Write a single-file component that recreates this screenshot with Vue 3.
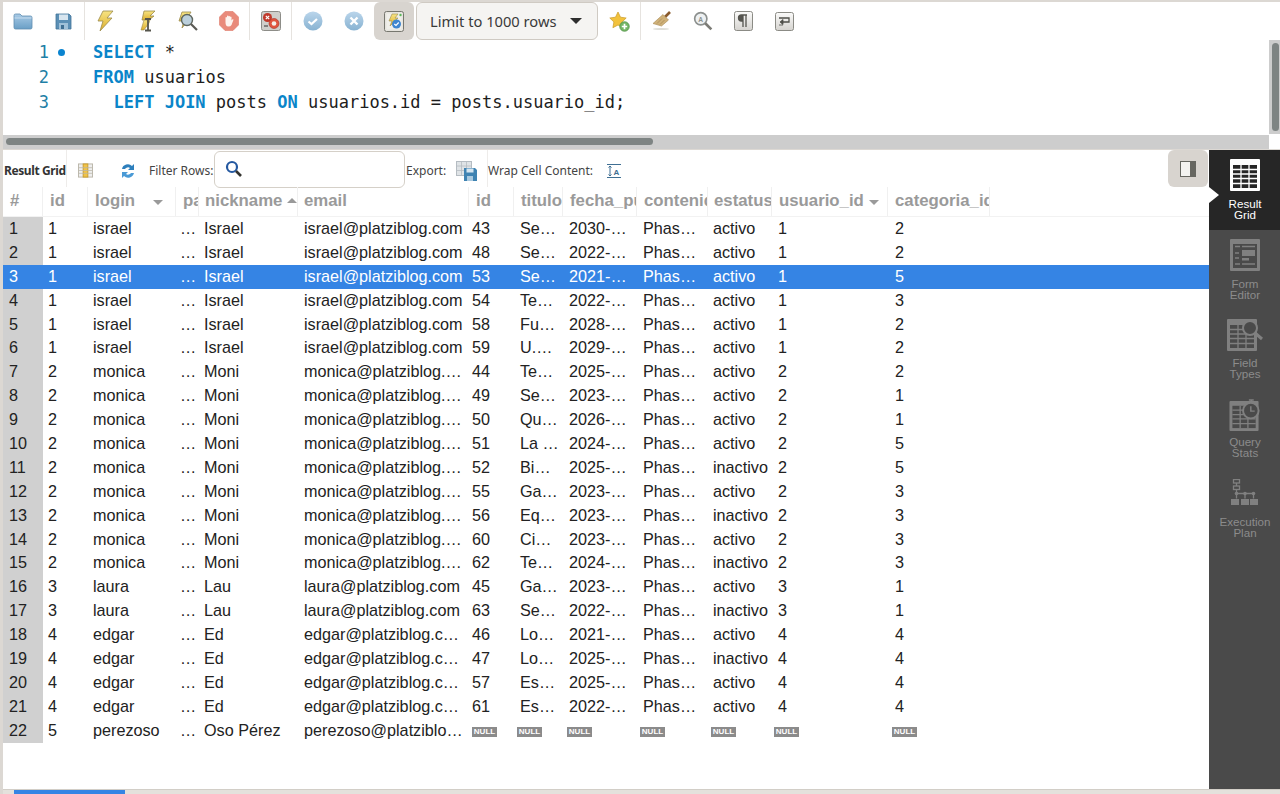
<script setup>
const headers = [
  { label: "#", w: 40 },
  { label: "id", w: 45 },
  { label: "login", w: 88, sort: "down" },
  { label: "pa", w: 23 },
  { label: "nickname", w: 99, sort: "up", tight: true },
  { label: "email", w: 171, tight: true },
  { label: "id", w: 45 },
  { label: "titulo", w: 49 },
  { label: "fecha_pu", w: 74 },
  { label: "contenido", w: 71 },
  { label: "estatus", w: 64, tight: true },
  { label: "usuario_id", w: 116, sort: "down far" },
  { label: "categoria_id", w: 102 },
];

const users = {
  1: ["1", "israel", "…", "Israel", "israel@platziblog.com"],
  2: ["2", "monica", "…", "Moni", "monica@platziblog.…"],
  3: ["3", "laura", "…", "Lau", "laura@platziblog.com"],
  4: ["4", "edgar", "…", "Ed", "edgar@platziblog.c…"],
  5: ["5", "perezoso", "…", "Oso Pérez", "perezoso@platziblo…"],
};

const posts = [
  [1, "43", "Se…", "2030-…", "activo", "2"],
  [1, "48", "Se…", "2022-…", "activo", "2"],
  [1, "53", "Se…", "2021-…", "activo", "5"],
  [1, "54", "Te…", "2022-…", "activo", "3"],
  [1, "58", "Fu…", "2028-…", "activo", "2"],
  [1, "59", "U.…", "2029-…", "activo", "2"],
  [2, "44", "Te…", "2025-…", "activo", "2"],
  [2, "49", "Se…", "2023-…", "activo", "1"],
  [2, "50", "Qu…", "2026-…", "activo", "1"],
  [2, "51", "La …", "2024-…", "activo", "5"],
  [2, "52", "Bi…", "2025-…", "inactivo", "5"],
  [2, "55", "Ga…", "2023-…", "activo", "3"],
  [2, "56", "Eq…", "2023-…", "inactivo", "3"],
  [2, "60", "Ci…", "2023-…", "activo", "3"],
  [2, "62", "Te…", "2024-…", "inactivo", "3"],
  [3, "45", "Ga…", "2023-…", "activo", "1"],
  [3, "63", "Se…", "2022-…", "inactivo", "1"],
  [4, "46", "Lo…", "2021-…", "activo", "4"],
  [4, "47", "Lo…", "2025-…", "inactivo", "4"],
  [4, "57", "Es…", "2025-…", "activo", "4"],
  [4, "61", "Es…", "2022-…", "activo", "4"],
];

const rows = posts.map((p, i) => {
  const u = users[p[0]];
  return {
    num: i + 1,
    cells: [...u, p[1], p[2], p[3], "Phas…", p[4], String(p[0]), p[5]],
  };
});
rows.push({
  num: 22,
  cells: [...users[5], null, null, null, null, null, null, null],
});

const headerCols = headers.map((h) => h.w + "px").join(" ");

// the NULL badges don't sit on the same left edge as the text of their column
const nullShift = { 5: 0, 6: -3, 7: -2, 8: -3, 9: -2, 10: -4, 11: -3 };
</script>

<template>
  <div class="app">
    <svg class="defs" width="0" height="0">
      <defs>
        <linearGradient id="gBlue" x1="0" y1="0" x2="0" y2="1">
          <stop offset="0" stop-color="#a9cbe6" />
          <stop offset="1" stop-color="#6a9fc6" />
        </linearGradient>
        <linearGradient id="gBolt" x1="0" y1="0" x2="0" y2="1">
          <stop offset="0" stop-color="#f7e483" />
          <stop offset="1" stop-color="#dcae2c" />
        </linearGradient>
        <linearGradient id="gKey" x1="0" y1="0" x2="0" y2="1">
          <stop offset="0" stop-color="#fbfbfa" />
          <stop offset="1" stop-color="#d5d3cf" />
        </linearGradient>
      </defs>
    </svg>

    <div class="topline"></div>

    <div class="toolbar">
      <div class="slot first">
        <svg width="20" height="18" viewBox="0 0 20 18">
          <path d="M1 3.500q0-1.500 1.500-1.500h4.500l2 2h8.500q1.500 0 1.500 1.500v10q0 1.500-1.500 1.500h-15q-1.500 0-1.500-1.500z" fill="url(#gBlue)" stroke="#5f8eb0" stroke-width=".8" />
          <path d="M1.500 6h17" stroke="#d3e5f2" stroke-width=".8" />
        </svg>
      </div>
      <div class="slot wide">
        <svg width="17" height="17" viewBox="0 0 17 17">
          <path d="M1 1h13l2 2v13h-15z" fill="#5b8fb5" stroke="#43749a" stroke-width=".8" />
          <rect x="4" y="1.500" width="9" height="5.500" fill="#d7e5ef" />
          <rect x="4" y="10" width="9" height="6" fill="#9fc0d8" />
          <rect x="6" y="12" width="3" height="4" fill="#3f6f93" />
        </svg>
      </div>
      <div class="sep"></div>
      <div class="slot narrow">
        <svg width="18" height="22" viewBox="0 0 18 22">
          <path d="M7 1h10l-6 7h5L4 21l3-10H2z" fill="url(#gBolt)" stroke="#9a8a4c" stroke-width=".8" />
        </svg>
      </div>
      <div class="slot extra">
        <svg width="18" height="22" viewBox="0 0 18 22">
          <path d="M6 1h11l-5 5h4l-5 4H4z" fill="url(#gBolt)" stroke="#9a8a4c" stroke-width=".8" />
          <path d="M3 20l3-10h6l-1 3-5 7z" fill="url(#gBolt)" stroke="#9a8a4c" stroke-width=".6" />
          <path d="M7 9h6M10 9v11M7 20.500h6" stroke="#55554c" stroke-width="1.800" fill="none" />
        </svg>
      </div>
      <div class="slot narrow">
        <svg width="22" height="21" viewBox="0 0 22 21">
          <path d="M5 1h9l-3 5h3L5 17l2-7H2z" fill="url(#gBolt)" stroke="#9a8a4c" stroke-width=".8" />
          <circle cx="10" cy="9" r="5.500" fill="#bcd0dc" stroke="#5e665f" stroke-width="1.400" />
          <path d="M14 13l6 6" stroke="#5b5b55" stroke-width="2.200" />
        </svg>
      </div>
      <div class="slot">
        <svg width="20" height="20" viewBox="0 0 20 20">
          <path d="M6 .5h8L19.500 6v8L14 19.500H6L.5 14V6z" fill="#e98a7a" stroke="#dd7a6a" stroke-width=".6" />
          <path d="M6.500 11V6.500a.8.8 0 0 1 1.500 0V5a.8.8 0 0 1 1.500 0v.5a.8.8 0 0 1 1.500 0V6a.8.8 0 0 1 1.500 0v3.500l.8-1c.7-.7 1.500 0 1 .8L12.500 14q-1 1.500-3 1.500c-2.500 0-3-2-3-4.500z" fill="#fdf3ee" />
        </svg>
      </div>
      <div class="sep"></div>
      <div class="slot">
        <svg width="20" height="20" viewBox="0 0 20 20">
          <rect x=".5" y=".5" width="19" height="19" rx="2" fill="#cfcfcb" stroke="#8d8d88" />
          <circle cx="6.500" cy="6.500" r="4.500" fill="#c0392b" />
          <path d="M4.800 4.800l3.400 3.400M8.200 4.800l-3.400 3.400" stroke="#fff" stroke-width="1.200" />
          <circle cx="13" cy="12.500" r="5" fill="#e0553f" stroke="#a93226" stroke-width=".6" />
          <circle cx="13" cy="12.500" r="2.300" fill="#f5f0ea" />
          <path d="M3 15h4" stroke="#666" stroke-width="1.500" />
        </svg>
      </div>
      <div class="sep"></div>
      <div class="slot">
        <svg width="20" height="20" viewBox="0 0 20 20">
          <circle cx="10" cy="10" r="9.500" fill="url(#gBlue)" opacity=".8" />
          <path d="M5.500 10.500l3 2.500 5.500-5" stroke="#fff" stroke-width="2.200" fill="none" />
        </svg>
      </div>
      <div class="slot">
        <svg width="20" height="20" viewBox="0 0 20 20">
          <circle cx="10" cy="10" r="9.500" fill="url(#gBlue)" opacity=".8" />
          <path d="M6.500 6.500l7 7M13.500 6.500l-7 7" stroke="#fff" stroke-width="2.400" />
        </svg>
      </div>
      <div class="slot active">
        <svg width="20" height="21" viewBox="0 0 20 21">
          <rect x=".5" y=".5" width="19" height="20" rx="2" fill="#e6e4de" stroke="#77776f" />
          <rect x="2.500" y="2.500" width="15" height="16" fill="#f0efea" />
          <path d="M8 3h6l-3 4h3L6 15l2-5H5z" fill="url(#gBolt)" stroke="#9a8a4c" stroke-width=".6" />
          <circle cx="12.500" cy="13" r="4.500" fill="#3f86d0" />
          <path d="M10.300 13l1.700 1.500 2.700-3" stroke="#fff" stroke-width="1.200" fill="none" />
          <circle cx="16.500" cy="4" r="1.200" fill="#5cb85c" />
        </svg>
      </div>
      <div class="combo">
        <span>Limit to 1000 rows</span>
        <span class="caret"></span>
      </div>
      <div class="slot wide">
        <svg width="21" height="21" viewBox="0 0 21 21">
          <path d="M9 1l2.500 5.200 5.700.8-4.100 4 1 5.700L9 14l-5.100 2.700 1-5.700-4.100-4 5.700-.8z" fill="#f2c23c" stroke="#c99a24" stroke-width=".7" />
          <circle cx="15.500" cy="15.500" r="4.800" fill="#74b566" stroke="#4f8f45" stroke-width=".7" />
          <path d="M15.500 12.800v5.400M12.800 15.500h5.400" stroke="#fff" stroke-width="1.700" />
        </svg>
      </div>
      <div class="sep"></div>
      <div class="slot">
        <svg width="20" height="20" viewBox="0 0 20 20">
          <path d="M13 6l5-5" stroke="#8a5a2c" stroke-width="2.600" />
          <path d="M11 3.500l5.500 5.500-7 6-8.500-2.500z" fill="#d0b27a" stroke="#a88a54" stroke-width=".6" />
          <path d="M5 12.500l5-5M8 13.500l4.500-4.500" stroke="#a88a54" stroke-width=".8" />
          <ellipse cx="9" cy="18" rx="8" ry="1" fill="#deded8" />
        </svg>
      </div>
      <div class="slot">
        <svg width="20" height="20" viewBox="0 0 18 18">
          <circle cx="7" cy="7" r="5.500" fill="#eef1f2" stroke="#8c908e" stroke-width="1.500" />
          <path d="M11 11l5.500 5.500" stroke="#7c7c76" stroke-width="2.400" />
          <text x="7" y="9.500" class="tiny">A</text>
        </svg>
      </div>
      <div class="slot">
        <svg width="19" height="20" viewBox="0 0 19 20">
          <rect x=".5" y=".5" width="18" height="19" rx="2" fill="url(#gKey)" stroke="#8b8b85" />
          <path d="M9 4H7.500a3 3 0 0 0 0 6H9zM9 4h4M9 4v12M12 4v12" fill="#55554f" stroke="#55554f" stroke-width="1.300" />
        </svg>
      </div>
      <div class="slot">
        <svg width="19" height="19" viewBox="0 0 19 19">
          <rect x=".5" y=".5" width="18" height="18" rx="2" fill="url(#gKey)" stroke="#8b8b85" />
          <path d="M4 6h10v4H7" stroke="#4f4f49" stroke-width="1.300" fill="none" />
          <path d="M8 7.500L5 10l3 2.500zM4 13h4" fill="#4f4f49" stroke="#4f4f49" stroke-width=".8" />
        </svg>
      </div>
    </div>

    <div class="editor-area">
      <div class="editor">
        <div class="code-line">
          <span class="ln">1</span><span class="dot"></span><span class="code"><b>SELECT</b> *</span>
        </div>
        <div class="code-line">
          <span class="ln">2</span><span class="nodot"></span><span class="code"><b>FROM</b> usuarios</span>
        </div>
        <div class="code-line">
          <span class="ln">3</span><span class="nodot"></span><span class="code">&nbsp;&nbsp;<b>LEFT JOIN</b> posts <b>ON</b> usuarios.id = posts.usuario_id;</span>
        </div>
      </div>
      <div class="vscroll"><div class="vthumb"></div></div>
    </div>
    <div class="hscroll-row">
      <div class="hscroll"><div class="hthumb"></div></div>
    </div>

    <div class="lower">
      <div class="results">
        <div class="result-bar">
          <span class="rg-title">Result Grid</span>
          <span class="rb-sep"></span>
          <svg class="rb-icon rb-grid" width="15" height="15" viewBox="0 0 16 15">
            <rect x=".5" y=".5" width="15" height="14" fill="#eee" stroke="#b9b5a8" />
            <rect x="5.500" y=".5" width="5" height="14" fill="#f0c348" stroke="#c99c2c" />
            <path d="M1 4.500h14M1 7.500h14M1 10.500h14" stroke="#b9b5a8" stroke-width=".8" />
          </svg>
          <svg class="rb-icon rb-refresh" width="18" height="16" viewBox="0 0 18 16">
            <path d="M3 6a6 6 0 0 1 10-3l2-2v6h-6l2-2a3.500 3.500 0 0 0-5 1z" fill="#2d7fbc" />
            <path d="M15 10a6 6 0 0 1-10 3l-2 2V9h6l-2 2a3.500 3.500 0 0 0 5-1z" fill="#4a9ad6" />
          </svg>
          <span class="rb-label filter-label">Filter Rows:</span>
          <div class="filter-box">
            <svg width="18" height="18" viewBox="0 0 18 18">
              <circle cx="7" cy="7" r="5" fill="#fff" stroke="#2458a0" stroke-width="2.200" />
              <path d="M11 11l5 5" stroke="#33332f" stroke-width="2.600" />
            </svg>
          </div>
          <span class="rb-label export-label">Export:</span>
          <svg class="rb-icon" width="21" height="20" viewBox="0 0 21 20">
            <rect x=".5" y=".5" width="15" height="14" fill="#dfe3e6" stroke="#b5bcc2" />
            <path d="M.5 5h15M.5 9.500h15M5.500.5v14M10.500.5v14" stroke="#b5bcc2" stroke-width=".8" />
            <path d="M8 7h11l2 2v11H8z" fill="#3f83b2" />
            <rect x="10.500" y="7.500" width="7" height="4" fill="#d5e5f0" />
            <rect x="11" y="15" width="6" height="5" fill="#a9c9df" />
          </svg>
          <span class="rb-sep2"></span>
          <span class="rb-label wrap-label">Wrap Cell Content:</span>
          <svg class="rb-icon" width="14" height="14" viewBox="0 0 14 14">
            <path d="M0 .5h14M0 13.500h14" stroke="#3f6f93" />
            <path d="M3 2v10M1.500 3.500L3 2l1.500 1.500M1.500 10.500L3 12l1.500-1.500" stroke="#3f6f93" fill="none" />
            <text x="9.500" y="10.500" class="wrap-a">A</text>
          </svg>
          <div class="panel-toggle">
            <svg width="16" height="16" viewBox="0 0 16 16">
              <rect x=".5" y=".5" width="15" height="15" fill="#f4f3f0" stroke="#666660" />
              <rect x="10" y="1" width="5" height="14" fill="#666660" />
            </svg>
          </div>
        </div>

        <div class="grid-head" :style="{ gridTemplateColumns: headerCols }">
          <div v-for="(h, i) in headers" :key="i" class="hcell" :class="{ tight: h.tight }">
            <span class="hlabel">{{ h.label }}</span>
            <span v-if="h.sort" class="sort" :class="h.sort"></span>
          </div>
        </div>

        <div class="grid-body">
          <div v-for="r in rows" :key="r.num" class="row" :class="{ selected: r.num === 3 }">
            <div class="rownum">{{ r.num }}</div>
            <div v-for="(c, i) in r.cells" :key="i" class="cell">
              <template v-if="c !== null">{{ c }}</template>
              <span v-else class="null" :style="{ marginLeft: nullShift[i] + 'px' }">NULL</span>
            </div>
          </div>
        </div>
      </div>

      <aside class="sidebar">
        <div class="side-item on">
          <svg width="30" height="32" viewBox="0 0 30 32">
            <rect width="30" height="32" rx="1" fill="#fff" />
            <rect x="3" y="6" width="24" height="23" fill="#262626" />
            <path d="M3 10.500h24M3 15h24M3 19.500h24M3 24.500h24M11 6v23M19 6v23" stroke="#fff" stroke-width="1.300" />
          </svg>
          <span>Result<br />Grid</span>
        </div>
        <div class="pointer"></div>
        <div class="side-item">
          <svg width="30" height="32" viewBox="0 0 30 32">
            <rect width="30" height="32" rx="1" fill="#808080" />
            <rect x="3" y="5" width="24" height="24" fill="#4a4a4a" />
            <path d="M5 7.500h5M5 14h4M5 19h4M5 25h5M12 7.500h13M12 25h13" stroke="#808080" stroke-width="1.300" />
            <rect x="12" y="11" width="13" height="6" fill="#808080" />
            <rect x="12" y="19" width="7" height="2.500" fill="#808080" />
          </svg>
          <span>Form<br />Editor</span>
        </div>
        <div class="side-item">
          <svg class="types" width="36" height="32" viewBox="0 0 36 32">
            <rect width="30" height="32" rx="1" fill="#808080" />
            <rect x="3" y="6" width="24" height="23" fill="#4a4a4a" />
            <path d="M3 10.500h24M3 15h24M3 19.500h24M3 24.500h24M11 6v23M19 6v23" stroke="#808080" stroke-width="1.300" />
            <circle cx="23" cy="9" r="7" fill="#4a4a4a" stroke="#808080" stroke-width="2" />
            <path d="M28 14l7 6" stroke="#808080" stroke-width="3" />
          </svg>
          <span>Field<br />Types</span>
        </div>
        <div class="side-item">
          <svg class="stats" width="32" height="33" viewBox="0 0 32 33">
            <rect y="2" width="30" height="31" rx="1" fill="#808080" />
            <rect x="3" y="7" width="24" height="23" fill="#4a4a4a" />
            <path d="M3 11.500h24M3 16h24M3 20.500h24M3 25.500h24M11 7v23M19 7v23" stroke="#808080" stroke-width="1.300" />
            <circle cx="22" cy="12" r="8" fill="#4a4a4a" stroke="#808080" stroke-width="2" />
            <path d="M22 7.500v5h4M20 1h5M22.500 1v3" stroke="#808080" stroke-width="1.500" fill="none" />
          </svg>
          <span>Query<br />Stats</span>
        </div>
        <div class="side-item">
          <svg width="28" height="27" viewBox="0 0 28 27" class="plan">
            <g fill="none" stroke="#808080" stroke-width="1.300">
              <rect x="2.500" y=".5" width="6" height="3.500" />
              <rect x="2.500" y="7" width="6" height="3.500" />
              <path d="M5.500 4v3M5.500 10.500v9M5.500 14.500h17M14 14.500v5M22.500 14.500v5" />
            </g>
            <g fill="#808080">
              <rect y="20" width="8" height="6" />
              <rect x="10" y="20" width="8" height="6" />
              <rect x="19" y="20" width="8" height="6" />
              <circle cx="5.500" cy="14.500" r="1.800" />
              <circle cx="14" cy="14.500" r="1.800" />
              <circle cx="22.500" cy="14.500" r="1.800" />
            </g>
          </svg>
          <span>Execution<br />Plan</span>
        </div>
      </aside>
    </div>

    <div class="statusbar"><div class="progress"></div></div>
  </div>
</template>

<style scoped>
.app {
  position: relative;
  width: 1280px;
  height: 794px;
  overflow: hidden;
  background: #fff;
  display: flex;
  flex-direction: column;
  border-top: 2px solid #dcd8d3;
  border-left: 3px solid #dcd8d3;
  box-sizing: border-box;
  font-family: "Liberation Sans", Arial, sans-serif;
  color: #1a1a1a;
}
.defs {
  display: block;
  height: 0;
}
.topline {
  position: absolute;
  top: -2px;
  left: 401px;
  width: 130px;
  height: 2px;
  background: #3584e4;
}
.toolbar {
  height: 38px;
  display: flex;
  align-items: stretch;
  flex-shrink: 0;
}
.slot {
  width: 41px;
  display: flex;
  align-items: center;
  justify-content: center;
}
.slot.first {
  width: 39px;
}
.slot.narrow {
  width: 40px;
}
.slot.wide {
  width: 42px;
}
.slot.extra {
  width: 43px;
}
.slot.active {
  width: 40px;
  background: #d8d4cf;
  border-radius: 6px;
}
.sep {
  width: 1px;
  background: #e6e3df;
}
.combo {
  width: 182px;
  margin-left: 2px;
  box-sizing: border-box;
  display: flex;
  align-items: center;
  justify-content: space-between;
  padding: 0 15px 0 13px;
  border: 1px solid #cfcac3;
  border-radius: 6px;
  background: #f5f4f2;
  font-family: "Noto Sans", sans-serif;
  font-size: 14.700px;
  color: #3a3a3a;
}
.caret {
  width: 0;
  height: 0;
  border-left: 6px solid transparent;
  border-right: 6px solid transparent;
  border-top: 6px solid #2e2e2e;
}
.tiny {
  font: bold 6px "Liberation Sans", sans-serif;
  fill: #8c908e;
  text-anchor: middle;
}
.wrap-a {
  font: bold 8px "Liberation Sans", sans-serif;
  fill: #3f6f93;
  text-anchor: middle;
}
.editor-area {
  height: 94px;
  flex-shrink: 0;
  display: flex;
}
.editor {
  flex: 1;
  font-family: "DejaVu Sans Mono", monospace;
  font-size: 17px;
  line-height: 25px;
  color: #1d1d1d;
}
.code-line {
  display: flex;
  height: 25px;
}
.ln {
  width: 46px;
  text-align: right;
  color: #1f7fa6;
}
.dot {
  width: 7px;
  height: 7px;
  margin: 9px 6px 0 9px;
  border-radius: 50%;
  background: #0a84d0;
}
.nodot {
  width: 22px;
}
.code {
  margin-left: 22px;
  white-space: pre;
}
.code b {
  color: #0a85c9;
  font-weight: 700;
}
.vscroll {
  width: 11px;
  background: #cdcdcd;
  padding: 3px 1px 3px 3px;
  box-sizing: border-box;
}
.vthumb {
  width: 7px;
  height: 100%;
  border-radius: 4px;
  background: #7e8483;
}
.hscroll-row {
  height: 14px;
  margin-top: 1px;
  flex-shrink: 0;
  display: flex;
}
.hscroll {
  width: 1266px;
  background: #cdcdcd;
  padding: 3px;
  box-sizing: border-box;
}
.hthumb {
  width: 647px;
  height: 7px;
  border-radius: 4px;
  background: #7e8483;
}
.lower {
  flex: 1;
  min-height: 0;
  display: flex;
  border-top: 1px solid #dcd8d3;
}
.results {
  flex: 1;
  min-width: 0;
  display: flex;
  flex-direction: column;
}
.result-bar {
  height: 37px;
  flex-shrink: 0;
  display: flex;
  align-items: center;
  font-family: "Noto Sans", sans-serif;
  font-size: 12px;
  color: #444;
}
.rg-title {
  width: 63px;
  margin-top: 4px;
  padding-left: 1px;
  box-sizing: border-box;
  font-weight: 700;
  letter-spacing: -.4px;
  color: #333;
  white-space: nowrap;
}
.rb-sep {
  width: 1px;
  height: 100%;
  background: #eeecea;
}
.rb-icon {
  margin-top: 4px;
}
.rb-grid {
  margin-left: 11px;
}
.rb-refresh {
  margin-left: 26px;
}
.rb-label {
  margin-top: 4px;
  white-space: nowrap;
}
.filter-label {
  margin-left: 12px;
  width: 65px;
}
.filter-box {
  width: 191px;
  height: 37px;
  margin-top: 1px;
  flex-shrink: 0;
  box-sizing: border-box;
  border: 1px solid #d5d0c8;
  border-radius: 6px;
  display: flex;
  align-items: center;
  padding-left: 10px;
}
.export-label {
  margin-left: 1px;
  width: 50px;
}
.rb-sep2 {
  width: 1px;
  height: 100%;
  margin-left: 10px;
  background: #eeecea;
}
.wrap-label {
  width: 119px;
}
.panel-toggle {
  margin-left: auto;
  margin-right: 1px;
  width: 40px;
  height: 37px;
  background: #d8d4cf;
  border-radius: 6px;
  display: flex;
  align-items: center;
  justify-content: center;
}
.grid-head {
  display: grid;
  height: 30px;
  flex-shrink: 0;
  box-sizing: border-box;
  border-bottom: 1px solid #f2f2f2;
}
.hcell {
  position: relative;
  overflow: hidden;
  white-space: nowrap;
  padding-left: 7px;
  border-right: 1px solid #f0f0f0;
  font-size: 16.800px;
  line-height: 28px;
  font-weight: 700;
  color: #9a9a9a;
  box-sizing: border-box;
}
.hcell.tight {
  padding-left: 6px;
}
.sort {
  position: absolute;
  top: 13px;
  right: 12px;
  width: 0;
  height: 0;
  border-left: 5px solid transparent;
  border-right: 5px solid transparent;
}
.sort.down {
  border-top: 5px solid #9a9a9a;
}
.sort.far {
  right: 8px;
}
.sort.up {
  right: 0;
  top: 11px;
  border-bottom: 5px solid #9a9a9a;
}
.grid-body {
  flex: 1;
}
.row {
  display: grid;
  grid-template-columns: 40px 45px 87px 24px 100px 168px 48px 49px 74px 70px 65px 117px 100px;
  height: 23.900px;
  line-height: 23px;
  font-size: 16.200px;
  color: #222;
}
.rownum {
  background: #d0d0d0;
  padding-left: 6px;
}
.cell {
  padding-left: 5px;
  white-space: nowrap;
  overflow: hidden;
}
.row.selected {
  background: #3584e4;
  color: #fff;
}
.row.selected .rownum {
  background: #3584e4;
}
.null {
  display: block;
  width: 25px;
  height: 10px;
  margin-top: 8px;
  background: #8b8b8b;
  color: #fff;
  font-size: 8px;
  font-weight: 700;
  line-height: 10px;
  text-align: center;
}
.sidebar {
  position: relative;
  width: 71px;
  flex-shrink: 0;
  background: #4a4a4a;
}
.side-item {
  height: 80px;
  box-sizing: border-box;
  padding-top: 9px;
  padding-left: 1px;
  display: flex;
  flex-direction: column;
  align-items: center;
  font-size: 11.600px;
  line-height: 11px;
  color: #8c8c8c;
  text-align: center;
}
.side-item svg {
  height: 32px;
  flex-shrink: 0;
  margin-bottom: 7px;
}
.side-item svg.types {
  margin-bottom: 6px;
}
.side-item svg.stats {
  margin-bottom: 5px;
}
.side-item.on {
  background: #262626;
  color: #fff;
}
.side-item .plan {
  height: 27px;
  margin-bottom: 10px;
}
.pointer {
  position: absolute;
  left: 0;
  top: 37px;
  width: 0;
  height: 0;
  border-top: 8px solid transparent;
  border-bottom: 8px solid transparent;
  border-left: 10px solid #fff;
}
.statusbar {
  height: 5px;
  flex-shrink: 0;
  background: #e4e1dc;
  border-top: 1px solid #d2cec7;
  box-sizing: border-box;
}
.progress {
  width: 111px;
  height: 4px;
  margin-left: 11px;
  background: #3584e4;
}
</style>
